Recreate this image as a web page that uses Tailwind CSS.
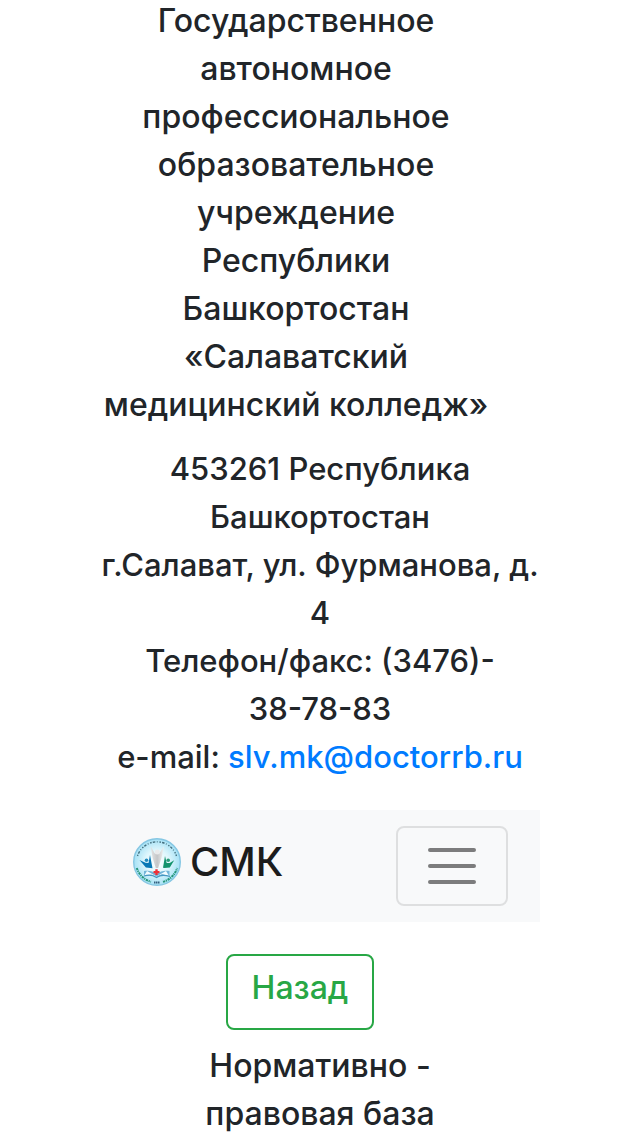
<!DOCTYPE html>
<html lang="ru">
<head>
<meta charset="utf-8">
<meta name="viewport" content="width=device-width, initial-scale=1">
<title>СМК</title>
<script src="https://cdn.jsdelivr.net/npm/@tailwindcss/browser@4"></script>
</head>
<body class="overflow-x-hidden bg-white font-['Inter','Liberation_Sans',sans-serif] text-[32px] leading-[48px] font-medium text-[#212529]">
<div class="-mt-[3px] px-[100px] text-center">
  <header>
    <p class="mb-4 pr-12 whitespace-nowrap">Государственное<br>автономное<br>профессиональное<br>образовательное<br>учреждение<br>Республики<br>Башкортостан<br>«Салаватский<br>медицинский колледж»</p>
    <address class="flex flex-col items-center text-[31px] leading-[48px] whitespace-nowrap not-italic">
      <span>453261 Республика</span>
      <span>Башкортостан</span>
      <span>г.Салават, ул. Фурманова, д.</span>
      <span>4</span>
      <span>Телефон/факс: (3476)-</span>
      <span>38-78-83</span>
      <span>e-mail: <a href="mailto:slv.mk@doctorrb.ru" class="text-[#007bff]">slv.mk@doctorrb.ru</a></span>
    </address>
  </header>
  <nav class="mt-[29px] flex items-center justify-between bg-[#f8f9fa] px-8 py-4">
    <a href="#" class="flex items-center gap-2 pb-2 text-[40px] leading-[60px] text-[#1c1c1c]">
      <svg class="size-[50px]" viewBox="0 0 50 50" aria-hidden="true">
        <defs>
          <radialGradient id="disc"><stop offset="0" stop-color="#fff"/><stop offset=".5" stop-color="#e0f7fd"/><stop offset="1" stop-color="#a5e1f5"/></radialGradient>
          <linearGradient id="figure"><stop offset="0" stop-color="#e5e5e5"/><stop offset=".5" stop-color="#c4c6c8"/><stop offset="1" stop-color="#f2f2f2"/></linearGradient>
        </defs>
        <circle cx="25" cy="25" r="23.3" fill="url(#disc)" stroke="#86c7e3" stroke-width="1.4"/>
        <path d="M5.5 19A20.5 20.5 0 0 1 44.5 19" fill="none" stroke="#416d7c" stroke-width="1.4" stroke-dasharray="1.4 1.2 2.5 1.6 .8 1.9"/>
        <path d="M4.8 31A21 21 0 0 0 19 44.8M31 44.8A21 21 0 0 0 45.2 31" fill="none" stroke="#259579" stroke-width="2" stroke-dasharray="2.3 .7 1.2 .8"/>
        <path d="M22 45.5h6" stroke="#345f7e" stroke-width="2" stroke-dasharray="1.5 .5"/>
        <path d="M18.5 9l4.3 7.4h4.5L32 9l-2.5 12-3.3 10h-2.5l-3-10z" fill="url(#figure)"/>
        <circle cx="25.3" cy="15" r="2.5" fill="#e9eaeb"/>
        <path d="M7.5 23l6 2.7 3 .3 1.5-8 2.5 13.2-6.6-.6z" fill="#0878b5"/><circle cx="14.5" cy="23.2" r="1.8" fill="#238bbd"/>
        <path d="M32.5 31l-1.5-.2 2-11.8 1.7 7h3l4.5-2.8-4.4 7.4z" fill="#13936c"/><circle cx="36.2" cy="23.2" r="1.8" fill="#299c79"/>
        <path d="M12 34c5-1 9 0 12.5 3 4-3 8-4 13-3v5c-5-1-9-1-12.5 1.5C21 38 17 38 12 39z" fill="#72b5d8"/>
        <path d="M15 34l9.5 5.5L34 34l3 5-7-2-5.5 3-5-2.5L12 39z" fill="#f4fcff"/>
        <path d="M12 39c6-2 9-1 12.5 1.5C28 38 33 38 38 39.5" fill="none" stroke="#4497c2" stroke-width="1.2"/>
        <path d="M23.3 32.2h2.4v1.7h1.8v2.4h-1.8V38h-2.4v-1.7h-1.8v-2.4h1.8z" fill="#ed3038"/>
      </svg>
      <span>СМК</span>
    </a>
    <button type="button" aria-label="Меню" class="flex h-20 w-28 items-center justify-center rounded-lg border-2 border-black/10">
      <svg class="size-[60px]" viewBox="0 0 30 30" aria-hidden="true"><path d="M4 7h22M4 15h22M4 23h22" stroke="#000" stroke-opacity=".5" stroke-linecap="round" stroke-width="2"/></svg>
    </button>
  </nav>
  <main>
    <div class="mt-8 flex justify-center pr-10">
      <button type="button" class="rounded-lg border-2 border-[#28a745] px-6 pt-2 pb-4 text-[#28a745]">Назад</button>
    </div>
    <h1 class="mt-3 font-medium whitespace-nowrap">Нормативно -<br>правовая база</h1>
  </main>
</div>
</body>
</html>
